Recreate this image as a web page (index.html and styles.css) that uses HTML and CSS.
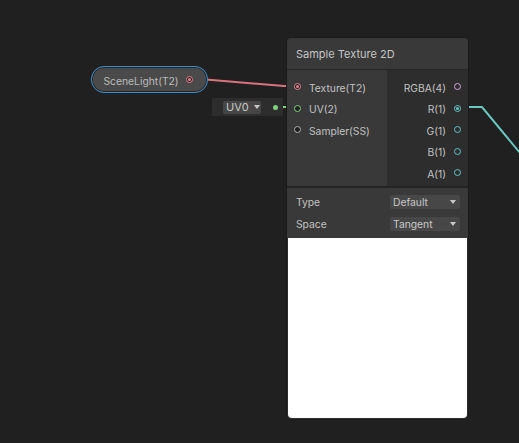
FILE: index.html
```html
<!DOCTYPE html>
<html>
<head>
<meta charset="utf-8">
<link rel="stylesheet" href="styles.css">
</head>
<body>
<div class="canvas">
  <svg class="edges" width="519" height="443" viewBox="0 0 519 443">
    <polyline points="206,79.5 284,86 298,86" fill="none" stroke="#d9737b" stroke-width="2"/>
    <line x1="276" y1="107" x2="298" y2="107" stroke="#7fd37f" stroke-width="2"/>
    <polyline points="458,107 482,107 520,153" fill="none" stroke="#69c7c0" stroke-width="2"/>
  </svg>

  <div class="prop">
    <span class="prop-label">SceneLight(T2)</span>
    <span class="port port-tex filled"></span>
  </div>

  <div class="uvbox">
    <div class="uvdrop">UV0 <span class="caret"></span></div>
    <span class="uvdot"></span>
  </div>

  <div class="node">
    <div class="title">Sample Texture 2D</div>
    <div class="ports">
      <div class="inputs">
        <div class="row"><span class="port port-tex filled"></span><span>Texture(T2)</span></div>
        <div class="row"><span class="port port-uv"></span><span>UV(2)</span></div>
        <div class="row"><span class="port port-ss"></span><span>Sampler(SS)</span></div>
      </div>
      <div class="outputs">
        <div class="row"><span>RGBA(4)</span><span class="port port-rgba"></span></div>
        <div class="row"><span>R(1)</span><span class="port port-v filled"></span></div>
        <div class="row"><span>G(1)</span><span class="port port-v"></span></div>
        <div class="row"><span>B(1)</span><span class="port port-v"></span></div>
        <div class="row"><span>A(1)</span><span class="port port-v"></span></div>
      </div>
    </div>
    <div class="controls">
      <div class="ctrl"><span>Type</span><div class="drop">Default<span class="caret"></span></div></div>
      <div class="ctrl"><span>Space</span><div class="drop">Tangent<span class="caret"></span></div></div>
    </div>
    <div class="preview"></div>
  </div>
</div>
</body>
</html>
```

FILE: styles.css
```css
html, body {
  margin: 0;
  padding: 0;
  background: #202020;
}
.canvas {
  position: relative;
  width: 519px;
  height: 443px;
  overflow: hidden;
  background: #202020;
  font-family: Inter, "Noto Sans", sans-serif;
  font-size: 10.3px;
  color: #c2c2c2;
}
.edges {
  position: absolute;
  left: 0;
  top: 0;
}
.prop {
  position: absolute;
  left: 91px;
  top: 66px;
  width: 117px;
  height: 27px;
  box-sizing: border-box;
  border: 1.5px solid #3a8ccc;
  border-radius: 13px;
  background: #4a4a4a;
  box-shadow: inset 0 0 0 1px #262626;
  display: flex;
  align-items: center;
  justify-content: space-between;
  padding-left: 11.5px;
  padding-right: 14px;
}
.prop-label {
  color: #bcbcbc;
  padding-top: 3px;
}
.uvbox {
  position: absolute;
  left: 212px;
  top: 98px;
  width: 71px;
  height: 18px;
  background: #2d2d2d;
  display: flex;
  align-items: center;
  padding-left: 11px;
  box-sizing: border-box;
  gap: 12px;
}
.uvdrop {
  width: 38px;
  height: 13px;
  background: #464646;
  border-radius: 2px;
  display: flex;
  align-items: center;
  padding-left: 3px;
  box-sizing: border-box;
  gap: 5px;
  font-size: 11px;
  color: #c8c8c8;
}
.uvdot {
  width: 5px;
  height: 5px;
  border-radius: 50%;
  background: #7fd37f;
}
.caret {
  width: 0;
  height: 0;
  border-left: 3.5px solid transparent;
  border-right: 3.5px solid transparent;
  border-top: 4px solid #c8c8c8;
}
.node {
  position: absolute;
  left: 287px;
  top: 38px;
  width: 181px;
  border-radius: 4px;
  background: #2e2e2e;
  box-shadow: 0 0 0 1px #1b1b1b;
  overflow: hidden;
}
.title {
  height: 31px;
  background: #393939;
  border-bottom: 1px solid #252525;
  display: flex;
  align-items: center;
  padding-left: 9px;
  font-size: 11px;
  color: #c6c6c6;
}
.ports {
  display: flex;
  height: 116px;
}
.inputs {
  width: 100px;
  background: #393939;
  padding-top: 6px;
  box-sizing: border-box;
}
.outputs {
  flex: 1;
  background: #2d2d2d;
  padding-top: 6px;
  box-sizing: border-box;
}
.row {
  height: 21.5px;
  display: flex;
  align-items: center;
}
.inputs .row {
  padding-left: 7px;
  gap: 8px;
}
.outputs .row {
  justify-content: flex-end;
  padding-right: 7px;
  gap: 8px;
}
.row span:not(.port) {
  padding-top: 2px;
}
.port {
  width: 5px;
  height: 5px;
  border-radius: 50%;
  border: 1.3px solid #aaa;
  background: #1f1f1f;
  flex: none;
  position: relative;
}
.port-tex { border-color: #e5838d; }
.port-uv { border-color: #7fd37f; }
.port-ss { border-color: #b0b0b0; }
.port-rgba { border-color: #d7a1d7; background: #2d2d2d; }
.port-v { border-color: #5fc4c4; background: #2d2d2d; }
.port.filled::after {
  content: "";
  position: absolute;
  left: 1px;
  top: 1px;
  width: 3px;
  height: 3px;
  border-radius: 50%;
  background: currentColor;
}
.port-tex.filled { color: #e5838d; }
.port-v.filled { color: #5fc4c4; }
.controls {
  border-top: 2px solid #242424;
  background: #393939;
  height: 52px;
  padding-top: 3px;
  box-sizing: border-box;
}
.ctrl {
  height: 22px;
  display: flex;
  align-items: center;
  justify-content: space-between;
  padding-left: 9px;
  padding-right: 8px;
}
.drop {
  width: 70px;
  height: 14px;
  background: #474747;
  border-radius: 2px;
  display: flex;
  align-items: center;
  justify-content: space-between;
  padding-left: 3px;
  padding-right: 4px;
  box-sizing: border-box;
  color: #c8c8c8;
}
.preview {
  height: 180px;
  background: #ffffff;
  margin: 0 1px 1px 1px;
  border-radius: 0 0 4px 4px;
}
```
